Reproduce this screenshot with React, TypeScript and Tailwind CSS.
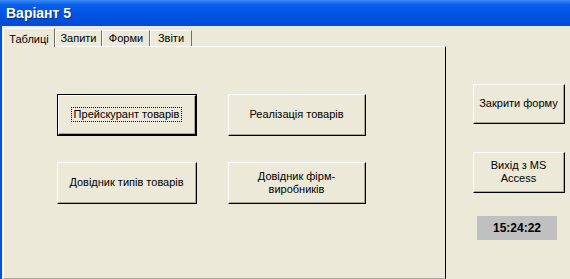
import React from 'react';

const font = "font-['Tahoma','Liberation_Sans',sans-serif]";

function Btn({
  children,
  focused = false,
  className = '',
}: {
  children: React.ReactNode;
  focused?: boolean;
  className?: string;
}) {
  return (
    <div
      className={`${className} ${
        focused ? 'border border-black' : ''
      } bg-[#ECE9D8]`}
    >
      <div className="w-full h-full border-t border-l border-white border-r border-b border-r-black border-b-black">
        <div className="w-full h-full border-r border-b border-[#ACA899] flex items-center justify-center text-center text-[11px] leading-[13px] text-black">
          {focused ? (
            <span className="border border-dotted border-black px-[2px]">{children}</span>
          ) : (
            children
          )}
        </div>
      </div>
    </div>
  );
}

const tabs = ['Таблиці', 'Запити', 'Форми', 'Звіти'];

export default function App() {
  return (
    <div className={`w-[570px] h-[279px] overflow-hidden bg-[#ECE9D8] flex flex-col ${font}`}>
      {/* Title bar */}
      <div className="h-[26px] flex-none flex items-center pl-[6px] bg-[linear-gradient(to_bottom,#3d8df5_0%,#0a5fea_18%,#0054e3_55%,#004ad6_100%)]">
        <span className="text-white font-bold text-[14px] [text-shadow:1px_1px_0_#0a2a80]">Варіант 5</span>
      </div>

      <div className="flex-1 flex">
        {/* window left frame */}
        <div className="w-[2px] bg-[#0053e0]" />

        {/* tab control */}
        <div className="w-[444px] pl-[1px] pt-[2px] flex flex-col">
          <div className="h-[18px] flex items-end relative z-10">
            {tabs.map((t, i) =>
              i === 0 ? (
                <div
                  key={t}
                  className="h-[19px] w-[52px] -mb-[1px] bg-[#ECE9D8] border-t border-l border-white border-r border-r-[#716F64] flex items-start justify-center pt-[2px] text-[11px] text-black"
                >
                  {t}
                </div>
              ) : (
                <div
                  key={t}
                  className={`h-[16px] ${
                    i === 1 ? 'w-[47px]' : i === 2 ? 'w-[48px]' : 'w-[42px]'
                  } bg-[#ECE9D8] border-t border-l border-white border-r border-r-[#716F64] flex items-center justify-center text-[11px] text-black`}
                >
                  {t}
                </div>
              )
            )}
          </div>
          <div className="flex-1 border-t border-l border-white border-r border-r-black border-b border-b-[#ACA899] pl-[53px] pt-[47px]">
            <div className="grid grid-cols-[140px_138px] gap-x-[31px] gap-y-[26px]">
              <Btn focused className="h-[42px]">Прейскурант товарів</Btn>
              <Btn className="h-[42px]">Реалізація товарів</Btn>
              <Btn className="h-[42px]">Довідник типів товарів</Btn>
              <Btn className="h-[42px]">
                Довідник фірм-
                <br />
                виробників
              </Btn>
            </div>
          </div>
        </div>

        {/* right side */}
        <div className="flex-1 pl-[27px] pt-[58px] flex flex-col">
          <Btn className="w-[92px] h-[40px]">Закрити форму</Btn>
          <Btn className="w-[92px] h-[41px] mt-[28px]">
            Вихід з MS
            <br />
            Access
          </Btn>
          <div className="w-[80px] h-[24px] mt-[23px] ml-[4px] bg-[#C0C0C0] flex items-center justify-center text-[12px] font-bold text-black">
            15:24:22
          </div>
        </div>
      </div>
    </div>
  );
}
